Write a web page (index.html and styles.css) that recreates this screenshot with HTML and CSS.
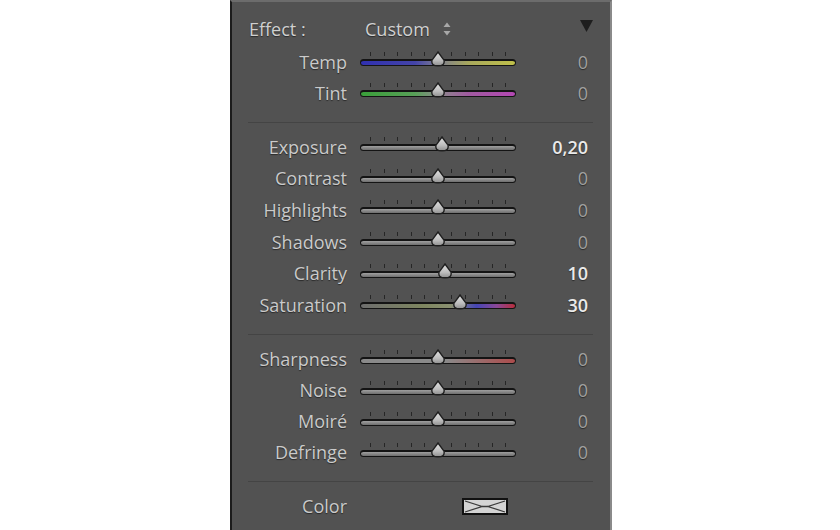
FILE: index.html
```html
<!DOCTYPE html>
<html>
<head>
<meta charset="utf-8">
<link rel="stylesheet" href="styles.css">
</head>
<body>
<div class="panel">
  <div class="header">
    <span class="effect">Effect :</span>
    <span class="preset">Custom</span>
    <svg class="updown" width="8" height="14" viewBox="0 0 8 14"><path d="M4 0.5 L7.5 5 L0.5 5 Z M4 13.5 L7.5 9 L0.5 9 Z" fill="#a8a8a8"/></svg>
    <svg class="collapse" width="13" height="12" viewBox="0 0 13 12"><path d="M0 0 L13 0 L6.5 12 Z" fill="#1e1e1e"/></svg>
  </div>

  <div class="row"><span class="label">Temp</span><div class="slider"><div class="ticks"></div><div class="track temp"></div><svg class="thumb" style="left:70px" width="16" height="16" viewBox="0 0 16 16"><use href="#th"/></svg></div><span class="val">0</span></div>
  <div class="row"><span class="label">Tint</span><div class="slider"><div class="ticks"></div><div class="track tint"></div><svg class="thumb" style="left:70px" width="16" height="16" viewBox="0 0 16 16"><use href="#th"/></svg></div><span class="val">0</span></div>

  <div class="sep"></div>

  <div class="row mid"><span class="label">Exposure</span><div class="slider"><div class="ticks"></div><div class="track"></div><svg class="thumb" style="left:74px" width="16" height="16" viewBox="0 0 16 16"><use href="#th"/></svg></div><span class="val on">0,20</span></div>
  <div class="row mid"><span class="label">Contrast</span><div class="slider"><div class="ticks"></div><div class="track"></div><svg class="thumb" style="left:70px" width="16" height="16" viewBox="0 0 16 16"><use href="#th"/></svg></div><span class="val">0</span></div>
  <div class="row mid"><span class="label">Highlights</span><div class="slider"><div class="ticks"></div><div class="track"></div><svg class="thumb" style="left:70px" width="16" height="16" viewBox="0 0 16 16"><use href="#th"/></svg></div><span class="val">0</span></div>
  <div class="row mid"><span class="label">Shadows</span><div class="slider"><div class="ticks"></div><div class="track"></div><svg class="thumb" style="left:70px" width="16" height="16" viewBox="0 0 16 16"><use href="#th"/></svg></div><span class="val">0</span></div>
  <div class="row mid"><span class="label">Clarity</span><div class="slider"><div class="ticks"></div><div class="track"></div><svg class="thumb" style="left:77px" width="16" height="16" viewBox="0 0 16 16"><use href="#th"/></svg></div><span class="val on">10</span></div>
  <div class="row mid"><span class="label">Saturation</span><div class="slider"><div class="ticks"></div><div class="track sat"></div><svg class="thumb" style="left:92px" width="16" height="16" viewBox="0 0 16 16"><use href="#th"/></svg></div><span class="val on">30</span></div>

  <div class="sep"></div>

  <div class="row"><span class="label">Sharpness</span><div class="slider"><div class="ticks"></div><div class="track sharp"></div><svg class="thumb" style="left:70px" width="16" height="16" viewBox="0 0 16 16"><use href="#th"/></svg></div><span class="val">0</span></div>
  <div class="row"><span class="label">Noise</span><div class="slider"><div class="ticks"></div><div class="track"></div><svg class="thumb" style="left:70px" width="16" height="16" viewBox="0 0 16 16"><use href="#th"/></svg></div><span class="val">0</span></div>
  <div class="row"><span class="label">Moiré</span><div class="slider"><div class="ticks"></div><div class="track"></div><svg class="thumb" style="left:70px" width="16" height="16" viewBox="0 0 16 16"><use href="#th"/></svg></div><span class="val">0</span></div>
  <div class="row"><span class="label">Defringe</span><div class="slider"><div class="ticks"></div><div class="track"></div><svg class="thumb" style="left:70px" width="16" height="16" viewBox="0 0 16 16"><use href="#th"/></svg></div><span class="val">0</span></div>

  <div class="sep last"></div>

  <div class="row"><span class="label">Color</span>
    <svg class="swatch" width="46" height="17" viewBox="0 0 46 17"><rect x="1" y="1" width="44" height="15" fill="#d4d4d4" stroke="#111" stroke-width="2"/><path d="M3 3 L20 8.5 L3 14 M43 3 L26 8.5 L43 14 M20 8.5 L26 8.5" fill="none" stroke="#3a3a3a" stroke-width="1.3"/></svg>
  </div>

  <svg width="0" height="0" class="defs">
    <defs>
      <linearGradient id="tg" x1="0" y1="0" x2="0" y2="1">
        <stop offset="0" stop-color="#e2e2e2"/>
        <stop offset="0.6" stop-color="#bdbdbd"/>
        <stop offset="1" stop-color="#8e8e8e"/>
      </linearGradient>
      <path id="th" d="M8 1 L14 9.2 Q15.2 14.8 8 14.8 Q0.8 14.8 2 9.2 Z" fill="url(#tg)" stroke="#1e1e1e" stroke-width="1.4"/>
    </defs>
  </svg>
</div>
</body>
</html>
```

FILE: styles.css
```css
html, body {
  margin: 0;
  padding: 0;
  background: #ffffff;
}

.panel {
  box-sizing: border-box;
  margin-left: 230px;
  width: 382px;
  height: 530px;
  overflow: hidden;
  background: #525252;
  border-left: 2px solid #1c1c1c;
  border-right: 2px solid #8a8a8a;
  border-top: 2px solid #6c6c6c;
  padding-top: 9px;
  font-family: "Open Sans", "Noto Sans", sans-serif;
  font-size: 18px;
  color: #cacaca;
  text-shadow: 0 1px 1px rgba(0, 0, 0, 0.5);
}

.header {
  display: flex;
  align-items: center;
  height: 35px;
  padding-left: 17px;
  padding-right: 17px;
}

.effect {
  width: 116px;
  color: #d0d0d0;
}

.preset {
  color: #d0d0d0;
}

.updown {
  margin-left: 13px;
  margin-top: 1px;
}

.collapse {
  margin-left: auto;
  margin-top: -6px;
}

.row {
  display: flex;
  align-items: center;
  height: 31px;
}

.row.mid {
  height: 31.6px;
}

.label {
  width: 115px;
  text-align: right;
  white-space: nowrap;
}

.slider {
  position: relative;
  margin-left: 13px;
  width: 156px;
  height: 31px;
}

.ticks {
  position: absolute;
  left: 10px;
  top: 6px;
  width: 137px;
  height: 4px;
  background: repeating-linear-gradient(90deg, #262626 0 1px, transparent 1px 13.5px);
}

.track {
  position: absolute;
  left: 0;
  right: 0;
  top: 13px;
  height: 7px;
  box-sizing: border-box;
  border: 1.5px solid #141414;
  border-top-width: 2px;
  border-radius: 4px;
  background: linear-gradient(180deg, #a0a0a0, #6e6e6e);
}

.track.temp {
  background: linear-gradient(90deg, #3030b0 0%, #4444a8 35%, #7c7c90 50%, #a8a85c 70%, #c0c04a 100%);
}

.track.tint {
  background: linear-gradient(90deg, #3aa03a 0%, #58a058 35%, #8a8a8a 50%, #a05aa0 70%, #b448b4 100%);
}

.track.sat {
  background: linear-gradient(90deg, #6e6e6e 0%, #7e8660 40%, #8a9070 58%, #4646b4 75%, #8a4898 88%, #b82e3c 100%);
}

.track.sharp {
  background: linear-gradient(90deg, #8a8a8a 0%, #8a8a8a 55%, #ac4c4c 100%);
}

.thumb {
  position: absolute;
  top: 5px;
}

.val {
  flex: 1;
  text-align: right;
  padding-right: 22px;
  color: #a0a0a0;
}

.val.on {
  color: #eaeaea;
  font-weight: 600;
}

.sep {
  height: 1px;
  background: #444444;
  margin: 13.5px 17px 8.5px 16px;
}

.sep.last {
  margin-top: 13.5px;
  margin-bottom: 8.5px;
}

.swatch {
  margin-left: 115px;
  display: block;
}

.defs {
  position: absolute;
}
```
